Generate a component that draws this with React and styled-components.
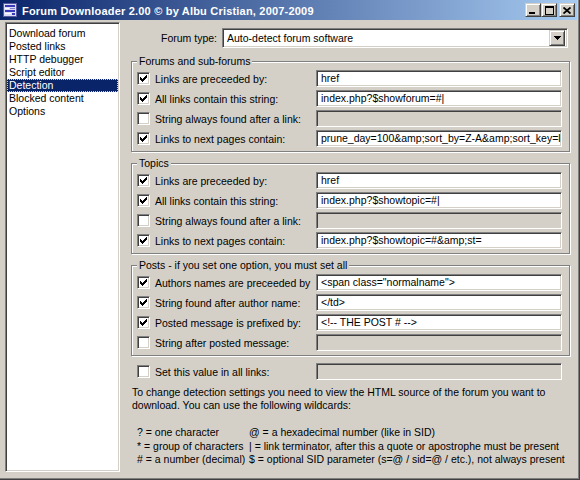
import React from 'react';
import styled, { createGlobalStyle } from 'styled-components';

const GlobalStyle = createGlobalStyle`
  html, body {
    margin: 0;
    padding: 0;
    background: #d4d0c8;
  }
  body {
    font-family: "Liberation Sans", Arial, sans-serif;
    font-size: 10.5px;
    color: #000;
  }
`;

const sunken = `
  box-sizing: border-box;
  border: 1px solid;
  border-color: #808080 #ffffff #ffffff #808080;
  box-shadow: inset 1px 1px 0 #404040, inset -1px -1px 0 #d4d0c8;
`;

const raised = `
  box-sizing: border-box;
  border: 1px solid;
  border-color: #d4d0c8 #404040 #404040 #d4d0c8;
  box-shadow: inset 1px 1px 0 #ffffff, inset -1px -1px 0 #808080;
  background: #d4d0c8;
`;

const Window = styled.div`
  box-sizing: border-box;
  width: 580px;
  height: 480px;
  display: flex;
  flex-direction: column;
  padding: 0 3px 3px 0;
  background: #d4d0c8;
  box-shadow: inset -1px -1px 0 #404040, inset -2px -2px 0 #808080;
`;

const TitleBar = styled.div`
  height: 20px;
  display: flex;
  align-items: center;
  padding: 0 2px 0 2px;
  background: linear-gradient(to right, #0a246a, #a6caf0);
`;

const Title = styled.div`
  margin-left: 4px;
  padding-top: 1px;
  color: #ffffff;
  font-weight: bold;
  font-size: 11px;
  letter-spacing: 0.2px;
  white-space: nowrap;
`;

const Controls = styled.div`
  margin-left: auto;
  display: flex;
  align-items: center;
`;

const CtlButton = styled.div`
  ${raised}
  width: 16px;
  height: 14px;
  display: flex;
  align-items: center;
  justify-content: center;
  margin-left: ${p => (p.$gap ? '2px' : '0')};
`;

const Body = styled.div`
  flex: 1;
  display: flex;
  padding: 2px 0 0 5px;
`;

const NavList = styled.div`
  ${sunken}
  width: 115px;
  height: 450px;
  padding: 4px 1px 1px 1px;
  background: #ffffff;
`;

const NavItem = styled.div`
  height: 13px;
  line-height: 13px;
  padding-left: 2px;
  white-space: nowrap;
  background: ${p => (p.$selected ? '#0a246a' : 'transparent')};
  color: ${p => (p.$selected ? '#ffffff' : '#000000')};
  outline: ${p => (p.$selected ? '1px dotted #d4d0c8' : 'none')};
  outline-offset: -1px;
`;

const Panel = styled.div`
  width: 439px;
  margin-left: 11px;
  display: flex;
  flex-direction: column;
`;

const TypeRow = styled.div`
  margin-top: 6px;
  display: flex;
  align-items: center;
  gap: 5px;
`;

const TypeLabel = styled.div`
  width: 86px;
  text-align: right;
`;

const Combo = styled.div`
  ${sunken}
  width: 346px;
  height: 20px;
  display: flex;
  align-items: center;
  padding: 2px 2px 2px 4px;
  background: #ffffff;
`;

const ComboText = styled.div`
  flex: 1;
`;

const DropButton = styled.div`
  ${raised}
  width: 16px;
  height: 16px;
  display: flex;
  align-items: center;
  justify-content: center;
`;

const Group = styled.fieldset`
  margin: ${p => (p.$first ? '7px' : '5px')} 0 0 0;
  padding: 3px 6px 4px 5px;
  min-inline-size: 0;
  border: 1px solid #808080;
  box-shadow: inset 1px 1px 0 #ffffff, 1px 1px 0 #ffffff;
`;

const Legend = styled.legend`
  padding: 0 2px;
  line-height: 12px;
  background: #d4d0c8;
`;

const Rows = styled.div`
  display: flex;
  flex-direction: column;
  gap: 3px;
`;

const Row = styled.div`
  display: grid;
  grid-template-columns: 18px 161px 246px;
  align-items: center;
  height: 17px;
  padding-left: ${p => (p.$loose ? '6px' : '0')};
  margin-top: ${p => (p.$loose ? '7px' : '0')};
`;

const Check = styled.div`
  ${sunken}
  width: 13px;
  height: 13px;
  background: #ffffff;
  display: flex;
  align-items: center;
  justify-content: center;
`;

const RowLabel = styled.div`
  white-space: nowrap;
`;

const TextField = styled.div`
  ${sunken}
  height: 17px;
  line-height: 15px;
  padding: 0 4px;
  overflow: hidden;
  white-space: nowrap;
  background: ${p => (p.$disabled ? '#d4d0c8' : '#ffffff')};
`;

const Help = styled.div`
  margin-top: 6px;
  padding-left: 1px;
  line-height: 13px;
`;

const Wildcards = styled.div`
  margin-top: 14px;
  padding-left: 6px;
  display: grid;
  grid-template-columns: 112px auto;
  line-height: 13.5px;
  white-space: nowrap;
`;

const AppIcon = () => (
  <svg width="16" height="16" viewBox="0 0 16 16" shapeRendering="crispEdges">
    <rect x="1.5" y="1.5" width="13" height="13" fill="#dcdcf4" stroke="#5a5aa0" />
    <rect x="3" y="3" width="10" height="2" fill="#3a3ab8" />
    <rect x="3" y="6" width="4" height="1" fill="#ffffff" />
    <rect x="8" y="6" width="5" height="1" fill="#8080c8" />
    <rect x="3" y="8" width="10" height="2" fill="#3a3ab8" />
    <rect x="3" y="11" width="6" height="1" fill="#ffffff" />
    <rect x="10" y="11" width="3" height="2" fill="#3a3ab8" />
  </svg>
);

const CheckMark = () => (
  <svg width="7" height="7" viewBox="0 0 7 7" shapeRendering="crispEdges">
    <path
      d="M0 2h1v1h1v1h1v-1h1v-1h1v-1h1v-1h1v3h-1v1h-1v1h-1v1h-1v1h-1v-1h-1v-1h-1z"
      fill="#000000"
    />
  </svg>
);

const Field = ({ checked, label, value }) => (
  <Row>
    <Check>{checked && <CheckMark />}</Check>
    <RowLabel>{label}</RowLabel>
    <TextField $disabled={!value}>{value}</TextField>
  </Row>
);

const navItems = [
  'Download forum',
  'Posted links',
  'HTTP debugger',
  'Script editor',
  'Detection',
  'Blocked content',
  'Options',
];

const groups = [
  {
    title: 'Forums and sub-forums',
    rows: [
      { checked: true, label: 'Links are preceeded by:', value: 'href' },
      { checked: true, label: 'All links contain this string:', value: 'index.php?$showforum=#|' },
      { checked: false, label: 'String always found after a link:', value: '' },
      { checked: true, label: 'Links to next pages contain:', value: 'prune_day=100&amp;sort_by=Z-A&amp;sort_key=l' },
    ],
  },
  {
    title: 'Topics',
    rows: [
      { checked: true, label: 'Links are preceeded by:', value: 'href' },
      { checked: true, label: 'All links contain this string:', value: 'index.php?$showtopic=#|' },
      { checked: false, label: 'String always found after a link:', value: '' },
      { checked: true, label: 'Links to next pages contain:', value: 'index.php?$showtopic=#&amp;st=' },
    ],
  },
  {
    title: 'Posts - if you set one option, you must set all',
    rows: [
      { checked: true, label: 'Authors names are preceeded by', value: '<span class="normalname">' },
      { checked: true, label: 'String found after author name:', value: '</td>' },
      { checked: true, label: 'Posted message is prefixed by:', value: '<!-- THE POST # -->' },
      { checked: false, label: 'String after posted message:', value: '' },
    ],
  },
];

const wildcards = [
  ['? = one character', '@ = a hexadecimal number (like in SID)'],
  ['* = group of characters', '| = link terminator, after this a quote or apostrophe must be present'],
  ['# = a number (decimal)', '$ = optional SID parameter (s=@ / sid=@ / etc.), not always present'],
];

export default function App() {
  return (
    <>
      <GlobalStyle />
      <Window>
        <TitleBar>
          <AppIcon />
          <Title>Forum Downloader 2.00 © by Albu Cristian, 2007-2009</Title>
          <Controls>
            <CtlButton>
              <svg width="8" height="7" viewBox="0 0 8 7" shapeRendering="crispEdges">
                <rect x="0" y="5" width="6" height="2" fill="#000" />
              </svg>
            </CtlButton>
            <CtlButton>
              <svg width="9" height="9" viewBox="0 0 9 9" shapeRendering="crispEdges">
                <path d="M0 0h9v9h-9z M1 2v6h7v-6z" fill="#000" fillRule="evenodd" />
              </svg>
            </CtlButton>
            <CtlButton $gap>
              <svg width="8" height="7" viewBox="0 0 8 7">
                <path d="M0.5 0.5 L7.5 6.5 M7.5 0.5 L0.5 6.5" stroke="#000" strokeWidth="1.8" />
              </svg>
            </CtlButton>
          </Controls>
        </TitleBar>
        <Body>
          <NavList>
            {navItems.map(item => (
              <NavItem key={item} $selected={item === 'Detection'}>{item}</NavItem>
            ))}
          </NavList>
          <Panel>
            <TypeRow>
              <TypeLabel>Forum type:</TypeLabel>
              <Combo>
                <ComboText>Auto-detect forum software</ComboText>
                <DropButton>
                  <svg width="7" height="4" viewBox="0 0 7 4" shapeRendering="crispEdges">
                    <path d="M0 0h7v1h-1v1h-1v1h-1v1h-1v-1h-1v-1h-1v-1h-1z" fill="#000" />
                  </svg>
                </DropButton>
              </Combo>
            </TypeRow>
            {groups.map((g, i) => (
              <Group key={g.title} $first={i === 0}>
                <Legend>{g.title}</Legend>
                <Rows>
                  {g.rows.map(r => (
                    <Field key={r.label} {...r} />
                  ))}
                </Rows>
              </Group>
            ))}
            <Row $loose>
              <Check />
              <RowLabel>Set this value in all links:</RowLabel>
              <TextField $disabled />
            </Row>
            <Help>
              To change detection settings you need to view the HTML source of the forum you want to
              download. You can use the following wildcards:
            </Help>
            <Wildcards>
              {wildcards.map(([a, b]) => (
                <React.Fragment key={a}>
                  <span>{a}</span>
                  <span>{b}</span>
                </React.Fragment>
              ))}
            </Wildcards>
          </Panel>
        </Body>
      </Window>
    </>
  );
}
